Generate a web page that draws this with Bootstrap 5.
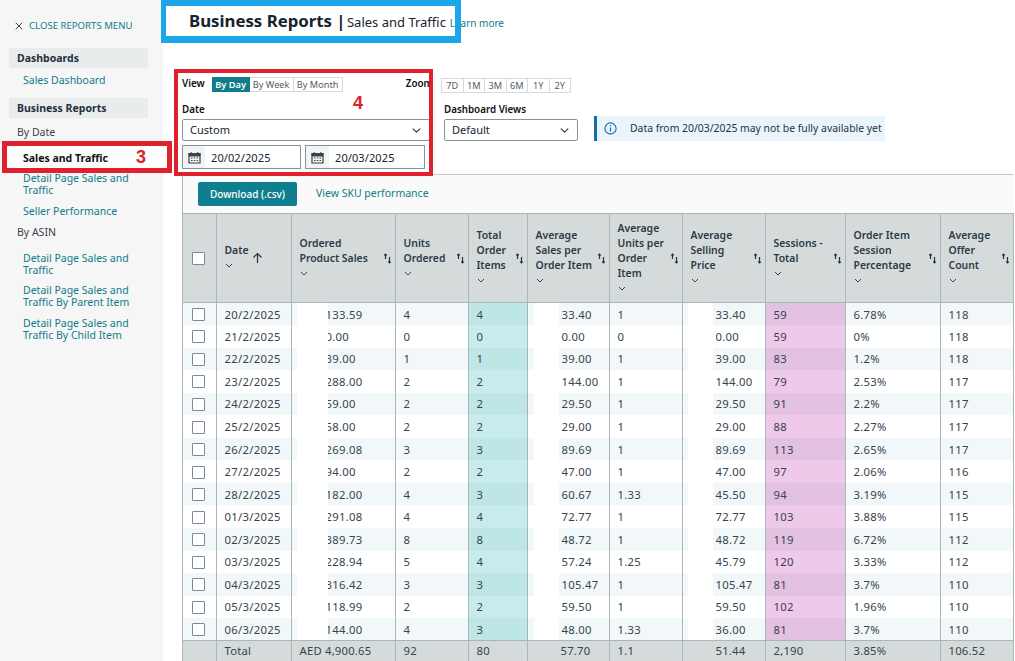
<!DOCTYPE html>
<html lang="en">
<head>
<meta charset="utf-8">
<title>Business Reports</title>
<link rel="stylesheet" href="https://cdn.jsdelivr.net/npm/bootstrap@5.3.0/dist/css/bootstrap.min.css">
<style>
html,body{height:661px;overflow:hidden}
body{font-family:"Noto Sans","Liberation Sans",sans-serif;font-size:10.5px;color:#26323c;background:#fff;position:relative}
a{color:#0f7c8a;text-decoration:none}
.rp-shell{height:661px;width:1015px}
.rp-side{width:163px;flex:none;background:#f6f6f6;padding:19px 0 0 9px;height:661px}
.rp-close{font-size:9.6px;padding-left:6px;height:14px;line-height:14px;margin-bottom:15px;gap:6px}
.rp-sec{width:139px;background:#e9ecec;font-weight:700;padding:0 8px;height:20px;line-height:20px;color:#232f3e}
.rp-link{display:block;padding-left:14px;line-height:12px;width:139px}
.rp-sub{padding-left:8px;line-height:14px;color:#37434d}
.rp-cur{font-weight:700;color:#111;position:relative;z-index:3;height:14px;line-height:14px;margin:12px 0 7px}
.rp-m6{margin:6px 0 12px}.rp-t7{margin-top:7px}.rp-t8{margin-top:8px}.rp-t9{margin-top:9px}.rp-t13{margin-top:13px}
.rp-main{flex:1;min-width:0;padding-left:19px}
.rp-head{height:69px;padding:10px 0 0 8px;color:#16232e;line-height:22px;white-space:nowrap;margin-left:-1px}
.rp-head b{font-size:16.8px;font-weight:700}
.rp-head span{font-size:13px;margin-left:-3px}
.rp-head a{font-size:10px;margin-left:1px}
.rp-controls{height:105px}
.rp-label{font-weight:600;font-size:9.8px;color:#111;line-height:14px}
.rp-lbl2{margin-bottom:2px}
.rp-zl{margin-right:-3px}
.rp-tabs{height:15px;margin-left:7px}
.rp-tabs .btn,.rp-zoom .btn{font-size:9.2px;line-height:13px;padding:0;border:1px solid #d5dbdb;color:#545b64;background:#fff;border-radius:0;height:15px;flex:none}
.rp-tabs .btn.active{background:#0f7c8a;border-color:#0f7c8a;color:#fff;font-weight:600}
.rp-tabs .w1{width:38px}.rp-tabs .w2{width:45px}.rp-tabs .w3{width:50px}
.rp-zoom{height:15px;margin-left:11px;margin-top:1px}
.rp-zoom .btn{width:22.5px}
.rp-col1{width:248px;flex:none}
.rp-row1{height:28px;padding-top:8px}
.rp-row2{margin-top:6px}
.rp-sel{font-size:11px;height:22px;border:1px solid #879596;border-radius:2px;padding:0 7px;color:#16232e;line-height:20px;background-color:#fff;background-size:11px 9px;background-position:right 7px center;font-family:inherit}
.rp-dates{gap:4px;margin-top:4px}
.rp-dates .input-group{width:119px;flex:none;height:24px;flex-wrap:nowrap}
.rp-dates .rp-g2{width:120px}
.rp-cal{width:24px;height:24px;padding:0;background:#f2f3f3;border:1px solid #879596;border-radius:0;justify-content:center}
.rp-g2 .rp-cal{width:25px}
.rp-dates .form-control{font-size:11px;height:24px;padding:0 6px;border:1px solid #879596;border-left:0;border-radius:0;color:#16232e;letter-spacing:.1px}
.rp-dv{width:134px;flex:none;margin-left:14px}
.rp-info{width:291px;height:25px;margin:13px 0 0 16px;background:#e9f5fb;border-left:3px solid #1a6ca8;padding-left:7px;gap:13px;color:#26323c;font-size:10.4px;align-self:flex-start;white-space:nowrap}
.rp-panel{border-top:1px solid #c4c9c9;border-left:1px solid #aab7b8;height:488px;background:#fafafa;width:832px}
.rp-bar{height:38px;padding:7px 0 0 15px;gap:19px}
.rp-dl{background:#0f7f90;color:#fff;font-size:10px;font-weight:500;width:99px;height:24px;padding:1px 0 0;border:0;border-radius:2px}
.rp-bar a{font-size:10.5px}
.rp-tbl{table-layout:fixed;width:830px;margin:0;border-collapse:collapse;font-size:11px;color:#37434d;--bs-table-bg:transparent;--bs-table-border-color:#aab7b8}
.rp-tbl td,.rp-tbl th{border:0;border-right:1px solid #aab7b8;padding:0 0 0 8px;vertical-align:middle;white-space:nowrap;position:relative;box-shadow:none;background:transparent;color:inherit}
.rp-tbl thead th{background:#d5dbdb;height:89px;white-space:normal;font-weight:600;color:#2b3a45;line-height:15px;border-top:1px solid #aab7b8;border-bottom:1px solid #aab7b8;font-size:10.4px}
.rp-tbl tbody td{height:22.55px;line-height:14px;background:#fff;letter-spacing:.3px;font-size:11.3px;padding-top:1px}
.rp-tbl tbody tr:nth-child(odd) td{background:#f2f8f9}
.rp-tbl tbody td:nth-child(5){background:#c8eceb}
.rp-tbl tbody tr:nth-child(odd) td:nth-child(5){background:#bde6e5}
.rp-tbl tbody td:nth-child(9){background:#eec9e9}
.rp-tbl tbody tr:nth-child(odd) td:nth-child(9){background:#e2c1e3}
.rp-tbl tbody td.rp-mask::after{content:"";position:absolute;top:0;bottom:0;background:#fff}
.rp-tbl tbody td.m1::after{left:5px;width:31px}
.rp-tbl tbody td.m2::after{left:6px;width:25px}
.rp-tbl tbody td.m3::after{left:5px;width:25px}
.rp-tbl td.rp-c0,.rp-tbl th.rp-c0{padding-left:9px}
.rp-tbl td.m3{padding-left:7px}
.rp-tbl td.m1{padding-left:8px}
.rp-tbl tfoot td{background:#d5dbdb;height:22px;border-top:1px solid #aab7b8;letter-spacing:.2px;font-size:11.3px}
.rp-tbl tfoot td.rp-tot{padding-left:33px}
.rp-chk{display:block;width:13px;height:13px;border:1px solid #7d8998;background:#fff;border-radius:1px}
.rp-th{display:flex;align-items:center;justify-content:space-between;padding-right:3px;gap:4px}
.rp-th>div{margin-bottom:5px}
.rp-th>svg{flex:none}
.rp-chev{display:block;margin-top:5px}
.rp-blue{position:absolute;left:161px;top:0;width:300px;height:43px;border:solid #1aa6e8;border-width:6px 6px 7px 5px;z-index:5;pointer-events:none}
.rp-red3{position:absolute;left:2px;top:141px;width:170px;height:32px;border:5px solid #e0202c;background:#fdfdfd;z-index:2;color:#e0202c;font-weight:800;font-size:18px;line-height:22px;padding-left:129px;font-family:"Liberation Sans",sans-serif}
.rp-red4{position:absolute;left:174px;top:69px;width:259px;height:107px;border:4.5px solid #e0202c;z-index:5;color:#e0202c;font-weight:800;font-size:18px;pointer-events:none;font-family:"Liberation Sans",sans-serif;padding:20px 0 0 175px;line-height:20px}
.cw0{width:33px}.cw1{width:75px}.cw2{width:104px}.cw3{width:73px}.cw4{width:59px}.cw5{width:82px}.cw6{width:73px}.cw7{width:83px}.cw8{width:80px}.cw9{width:95px}.cw10{width:73px}
</style>
</head>
<body>
<div class="d-flex rp-shell">
  <aside class="rp-side">
    <div class="d-flex align-items-center rp-close">
      <svg width="8" height="8" viewBox="0 0 8 8"><path d="M.7.7l6.6 6.6M7.3.7L.7 7.3" stroke="#37434d" stroke-width="1" fill="none"/></svg>
      <a href="#">CLOSE REPORTS MENU</a>
    </div>
    <div class="rp-sec">Dashboards</div>
    <a class="rp-link rp-m6" href="#">Sales Dashboard</a>
    <div class="rp-sec">Business Reports</div>
    <div class="rp-sub rp-t7">By Date</div>
    <div class="rp-link rp-cur">Sales and Traffic</div>
    <a class="rp-link" href="#">Detail Page Sales and Traffic</a>
    <a class="rp-link rp-t9" href="#">Seller Performance</a>
    <div class="rp-sub rp-t8">By ASIN</div>
    <a class="rp-link rp-t13" href="#">Detail Page Sales and Traffic</a>
    <a class="rp-link rp-t8" href="#">Detail Page Sales and Traffic By Parent Item</a>
    <a class="rp-link rp-t9" href="#">Detail Page Sales and Traffic By Child Item</a>
  </aside>
  <main class="rp-main">
    <div class="rp-head"><b>Business Reports | </b><span>Sales and Traffic</span> <a href="#">Learn more</a></div>
    <div class="rp-controls">
      <div class="d-flex rp-row1">
        <div class="rp-col1 d-flex align-items-start">
          <span class="rp-label">View</span>
          <div class="btn-group rp-tabs" role="group">
            <button class="btn active w1">By Day</button><button class="btn w2">By Week</button><button class="btn w3">By Month</button>
          </div>
          <span class="rp-label ms-auto rp-zl">Zoom</span>
        </div>
        <div class="btn-group rp-zoom" role="group">
          <button class="btn">7D</button><button class="btn">1M</button><button class="btn">3M</button><button class="btn">6M</button><button class="btn">1Y</button><button class="btn">2Y</button>
        </div>
      </div>
      <div class="d-flex rp-row2">
        <div class="rp-col1">
          <div class="rp-label rp-lbl2">Date</div>
          <select class="form-select rp-sel"><option>Custom</option></select>
          <div class="d-flex rp-dates">
            <div class="input-group">
              <span class="input-group-text rp-cal"><svg width="13" height="13" viewBox="0 0 13 13"><path d="M1 2.5h11v9.5H1z" fill="none" stroke="#37434d" stroke-width="1.2"/><path d="M1 2.5h11V5H1zM3.2 1v2M9.8 1v2" fill="#37434d" stroke="#37434d"/><path d="M3 7h1.5M5.8 7h1.5M8.6 7h1.5M3 9.5h1.5M5.8 9.5h1.5M8.6 9.5h1.5" stroke="#37434d"/></svg></span>
              <input class="form-control" value="20/02/2025">
            </div>
            <div class="input-group rp-g2">
              <span class="input-group-text rp-cal"><svg width="13" height="13" viewBox="0 0 13 13"><path d="M1 2.5h11v9.5H1z" fill="none" stroke="#37434d" stroke-width="1.2"/><path d="M1 2.5h11V5H1zM3.2 1v2M9.8 1v2" fill="#37434d" stroke="#37434d"/><path d="M3 7h1.5M5.8 7h1.5M8.6 7h1.5M3 9.5h1.5M5.8 9.5h1.5M8.6 9.5h1.5" stroke="#37434d"/></svg></span>
              <input class="form-control" value="20/03/2025">
            </div>
          </div>
        </div>
        <div class="rp-dv">
          <div class="rp-label rp-lbl2">Dashboard Views</div>
          <select class="form-select rp-sel"><option>Default</option></select>
        </div>
        <div class="rp-info d-flex align-items-center">
          <svg width="13" height="13" viewBox="0 0 13 13"><circle cx="6.5" cy="6.5" r="5.6" fill="none" stroke="#1a6ca8" stroke-width="1.1"/><path d="M6.5 5.6v4M6.5 3.2v1.3" stroke="#1a6ca8" stroke-width="1.2"/></svg>
          <span>Data from 20/03/2025 may not be fully available yet</span>
        </div>
      </div>
    </div>
    <div class="rp-panel">
      <div class="d-flex align-items-start rp-bar">
        <button class="btn rp-dl">Download (.csv)</button>
        <a href="#" class="pt-1">View SKU performance</a>
      </div>
      <table class="table rp-tbl">
        <colgroup><col class="cw0"><col class="cw1"><col class="cw2"><col class="cw3"><col class="cw4"><col class="cw5"><col class="cw6"><col class="cw7"><col class="cw8"><col class="cw9"><col class="cw10"></colgroup>
        <thead><tr>
          <th class="rp-c0"><span class="rp-chk"></span></th>
          <th><div class="rp-th justify-content-start gap-1"><div>Date<svg class="rp-chev" width="8" height="5" viewBox="0 0 8 5"><path d="M1 1l3 3 3-3" fill="none" stroke="#37434d"/></svg></div><svg width="11" height="12" viewBox="0 0 11 12"><path d="M5.5 11V1.5M1.5 5.5l4-4 4 4" fill="none" stroke="#26323c" stroke-width="1.2"/></svg></div></th>
          <th><div class="rp-th"><div>Ordered Product Sales<svg class="rp-chev" width="8" height="5" viewBox="0 0 8 5"><path d="M1 1l3 3 3-3" fill="none" stroke="#37434d"/></svg></div><svg width="9" height="11" viewBox="0 0 9 11"><path d="M2.5 6V1M1.2 2.3L2.5 1l1.3 1.3M6.5 4v6M5.2 8.7L6.5 10l1.3-1.3" fill="none" stroke="#26323c" stroke-width="1.2"/></svg></div></th>
          <th><div class="rp-th"><div>Units Ordered<svg class="rp-chev" width="8" height="5" viewBox="0 0 8 5"><path d="M1 1l3 3 3-3" fill="none" stroke="#37434d"/></svg></div><svg width="9" height="11" viewBox="0 0 9 11"><path d="M2.5 6V1M1.2 2.3L2.5 1l1.3 1.3M6.5 4v6M5.2 8.7L6.5 10l1.3-1.3" fill="none" stroke="#26323c" stroke-width="1.2"/></svg></div></th>
          <th><div class="rp-th"><div>Total Order Items<svg class="rp-chev" width="8" height="5" viewBox="0 0 8 5"><path d="M1 1l3 3 3-3" fill="none" stroke="#37434d"/></svg></div><svg width="9" height="11" viewBox="0 0 9 11"><path d="M2.5 6V1M1.2 2.3L2.5 1l1.3 1.3M6.5 4v6M5.2 8.7L6.5 10l1.3-1.3" fill="none" stroke="#26323c" stroke-width="1.2"/></svg></div></th>
          <th><div class="rp-th"><div>Average Sales per Order Item<svg class="rp-chev" width="8" height="5" viewBox="0 0 8 5"><path d="M1 1l3 3 3-3" fill="none" stroke="#37434d"/></svg></div><svg width="9" height="11" viewBox="0 0 9 11"><path d="M2.5 6V1M1.2 2.3L2.5 1l1.3 1.3M6.5 4v6M5.2 8.7L6.5 10l1.3-1.3" fill="none" stroke="#26323c" stroke-width="1.2"/></svg></div></th>
          <th><div class="rp-th"><div>Average Units per Order Item<svg class="rp-chev" width="8" height="5" viewBox="0 0 8 5"><path d="M1 1l3 3 3-3" fill="none" stroke="#37434d"/></svg></div><svg width="9" height="11" viewBox="0 0 9 11"><path d="M2.5 6V1M1.2 2.3L2.5 1l1.3 1.3M6.5 4v6M5.2 8.7L6.5 10l1.3-1.3" fill="none" stroke="#26323c" stroke-width="1.2"/></svg></div></th>
          <th><div class="rp-th"><div>Average Selling Price<svg class="rp-chev" width="8" height="5" viewBox="0 0 8 5"><path d="M1 1l3 3 3-3" fill="none" stroke="#37434d"/></svg></div><svg width="9" height="11" viewBox="0 0 9 11"><path d="M2.5 6V1M1.2 2.3L2.5 1l1.3 1.3M6.5 4v6M5.2 8.7L6.5 10l1.3-1.3" fill="none" stroke="#26323c" stroke-width="1.2"/></svg></div></th>
          <th><div class="rp-th"><div>Sessions - Total<svg class="rp-chev" width="8" height="5" viewBox="0 0 8 5"><path d="M1 1l3 3 3-3" fill="none" stroke="#37434d"/></svg></div><svg width="9" height="11" viewBox="0 0 9 11"><path d="M2.5 6V1M1.2 2.3L2.5 1l1.3 1.3M6.5 4v6M5.2 8.7L6.5 10l1.3-1.3" fill="none" stroke="#26323c" stroke-width="1.2"/></svg></div></th>
          <th><div class="rp-th"><div>Order Item Session Percentage<svg class="rp-chev" width="8" height="5" viewBox="0 0 8 5"><path d="M1 1l3 3 3-3" fill="none" stroke="#37434d"/></svg></div><svg width="9" height="11" viewBox="0 0 9 11"><path d="M2.5 6V1M1.2 2.3L2.5 1l1.3 1.3M6.5 4v6M5.2 8.7L6.5 10l1.3-1.3" fill="none" stroke="#26323c" stroke-width="1.2"/></svg></div></th>
          <th><div class="rp-th"><div>Average Offer Count<svg class="rp-chev" width="8" height="5" viewBox="0 0 8 5"><path d="M1 1l3 3 3-3" fill="none" stroke="#37434d"/></svg></div><svg width="9" height="11" viewBox="0 0 9 11"><path d="M2.5 6V1M1.2 2.3L2.5 1l1.3 1.3M6.5 4v6M5.2 8.7L6.5 10l1.3-1.3" fill="none" stroke="#26323c" stroke-width="1.2"/></svg></div></th>
        </tr></thead>
        <tbody>
          <tr><td class="rp-c0"><span class="rp-chk"></span></td><td>20/2/2025</td><td class="rp-mask m1">AED 133.59</td><td>4</td><td>4</td><td class="rp-mask m2">AED 33.40</td><td>1</td><td class="rp-mask m3">AED 33.40</td><td>59</td><td>6.78%</td><td>118</td></tr>
          <tr><td class="rp-c0"><span class="rp-chk"></span></td><td>21/2/2025</td><td class="rp-mask m1">AED 0.00</td><td>0</td><td>0</td><td class="rp-mask m2">AED 0.00</td><td>0</td><td class="rp-mask m3">AED 0.00</td><td>59</td><td>0%</td><td>118</td></tr>
          <tr><td class="rp-c0"><span class="rp-chk"></span></td><td>22/2/2025</td><td class="rp-mask m1">AED 39.00</td><td>1</td><td>1</td><td class="rp-mask m2">AED 39.00</td><td>1</td><td class="rp-mask m3">AED 39.00</td><td>83</td><td>1.2%</td><td>118</td></tr>
          <tr><td class="rp-c0"><span class="rp-chk"></span></td><td>23/2/2025</td><td class="rp-mask m1">AED 288.00</td><td>2</td><td>2</td><td class="rp-mask m2">AED 144.00</td><td>1</td><td class="rp-mask m3">AED 144.00</td><td>79</td><td>2.53%</td><td>117</td></tr>
          <tr><td class="rp-c0"><span class="rp-chk"></span></td><td>24/2/2025</td><td class="rp-mask m1">AED 59.00</td><td>2</td><td>2</td><td class="rp-mask m2">AED 29.50</td><td>1</td><td class="rp-mask m3">AED 29.50</td><td>91</td><td>2.2%</td><td>117</td></tr>
          <tr><td class="rp-c0"><span class="rp-chk"></span></td><td>25/2/2025</td><td class="rp-mask m1">AED 58.00</td><td>2</td><td>2</td><td class="rp-mask m2">AED 29.00</td><td>1</td><td class="rp-mask m3">AED 29.00</td><td>88</td><td>2.27%</td><td>117</td></tr>
          <tr><td class="rp-c0"><span class="rp-chk"></span></td><td>26/2/2025</td><td class="rp-mask m1">AED 269.08</td><td>3</td><td>3</td><td class="rp-mask m2">AED 89.69</td><td>1</td><td class="rp-mask m3">AED 89.69</td><td>113</td><td>2.65%</td><td>117</td></tr>
          <tr><td class="rp-c0"><span class="rp-chk"></span></td><td>27/2/2025</td><td class="rp-mask m1">AED 94.00</td><td>2</td><td>2</td><td class="rp-mask m2">AED 47.00</td><td>1</td><td class="rp-mask m3">AED 47.00</td><td>97</td><td>2.06%</td><td>116</td></tr>
          <tr><td class="rp-c0"><span class="rp-chk"></span></td><td>28/2/2025</td><td class="rp-mask m1">AED 182.00</td><td>4</td><td>3</td><td class="rp-mask m2">AED 60.67</td><td>1.33</td><td class="rp-mask m3">AED 45.50</td><td>94</td><td>3.19%</td><td>115</td></tr>
          <tr><td class="rp-c0"><span class="rp-chk"></span></td><td>01/3/2025</td><td class="rp-mask m1">AED 291.08</td><td>4</td><td>4</td><td class="rp-mask m2">AED 72.77</td><td>1</td><td class="rp-mask m3">AED 72.77</td><td>103</td><td>3.88%</td><td>115</td></tr>
          <tr><td class="rp-c0"><span class="rp-chk"></span></td><td>02/3/2025</td><td class="rp-mask m1">AED 389.73</td><td>8</td><td>8</td><td class="rp-mask m2">AED 48.72</td><td>1</td><td class="rp-mask m3">AED 48.72</td><td>119</td><td>6.72%</td><td>112</td></tr>
          <tr><td class="rp-c0"><span class="rp-chk"></span></td><td>03/3/2025</td><td class="rp-mask m1">AED 228.94</td><td>5</td><td>4</td><td class="rp-mask m2">AED 57.24</td><td>1.25</td><td class="rp-mask m3">AED 45.79</td><td>120</td><td>3.33%</td><td>112</td></tr>
          <tr><td class="rp-c0"><span class="rp-chk"></span></td><td>04/3/2025</td><td class="rp-mask m1">AED 316.42</td><td>3</td><td>3</td><td class="rp-mask m2">AED 105.47</td><td>1</td><td class="rp-mask m3">AED 105.47</td><td>81</td><td>3.7%</td><td>110</td></tr>
          <tr><td class="rp-c0"><span class="rp-chk"></span></td><td>05/3/2025</td><td class="rp-mask m1">AED 118.99</td><td>2</td><td>2</td><td class="rp-mask m2">AED 59.50</td><td>1</td><td class="rp-mask m3">AED 59.50</td><td>102</td><td>1.96%</td><td>110</td></tr>
          <tr><td class="rp-c0"><span class="rp-chk"></span></td><td>06/3/2025</td><td class="rp-mask m1">AED 144.00</td><td>4</td><td>3</td><td class="rp-mask m2">AED 48.00</td><td>1.33</td><td class="rp-mask m3">AED 36.00</td><td>81</td><td>3.7%</td><td>110</td></tr>
        </tbody>
        <tfoot><tr><td></td><td>Total</td><td>AED 4,900.65</td><td>92</td><td>80</td><td class="rp-tot">57.70</td><td>1.1</td><td class="rp-tot">51.44</td><td>2,190</td><td>3.85%</td><td>106.52</td></tr></tfoot>
      </table>
    </div>
  </main>
</div>
<div class="rp-blue"></div>
<div class="rp-red3">3</div>
<div class="rp-red4">4</div>
</body>
</html>
